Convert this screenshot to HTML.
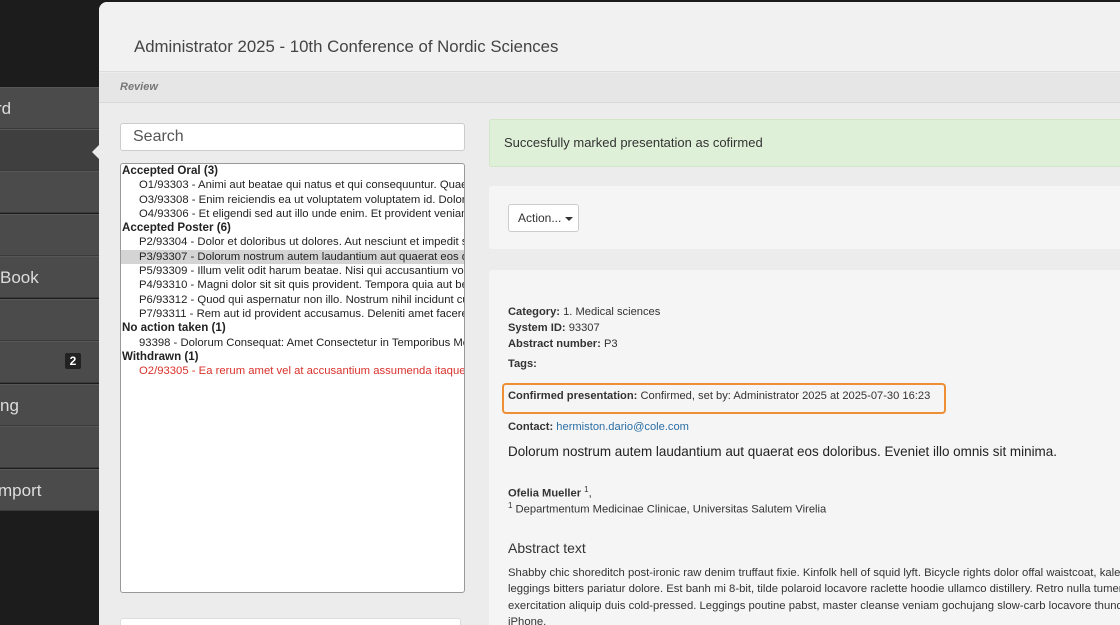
<!DOCTYPE html>
<html style="width:1120px;height:625px;overflow:hidden"><head><meta charset="utf-8"><style>
*{margin:0;padding:0;box-sizing:border-box}
body{width:1120px;height:625px;overflow:hidden;background:#1c1c1c;font-family:"Liberation Sans",Arial,sans-serif;position:relative;color:#333}
.a{position:absolute;white-space:nowrap}
.si{position:absolute;left:0;width:99px;height:42px;background:#4b4b4b;border-bottom:1px solid #3a3a3a;border-top:1px solid #575757;color:#ddd;font-size:17px;line-height:42px}
.lst div{height:14.3px;line-height:14.3px;font-size:11.3px;color:#222}
.lst .g{font-weight:bold;padding-left:1px;font-size:11.6px}
.lst .i{padding-left:18px}
.c{font-size:11.15px;color:#333}
</style></head><body>
<div class="si" style="top:87px"><span style="margin-left:-4px">rd</span></div>
<div class="si" style="top:129px;background:#3f3f3f"></div>
<div class="si" style="top:171px"></div>
<div class="si" style="top:214px"></div>
<div class="si" style="top:256px">Book</div>
<div class="si" style="top:299px"></div>
<div class="si" style="top:341px"><span class="a" style="left:65px;top:11px;width:16px;height:16px;background:#222;color:#fff;font-size:12px;font-weight:bold;line-height:16px;text-align:center;border-radius:2px">2</span></div>
<div class="si" style="top:384px">ng</div>
<div class="si" style="top:426px"></div>
<div class="si" style="top:469px"><span style="margin-left:-2px">mport</span></div>

<div class="a" style="left:99px;top:2px;width:1021px;height:623px;background:#ececec;border-top-left-radius:8px;overflow:hidden">
 <div class="a" style="left:0;top:0;width:100%;height:70px;background:#f1f1f1;border-bottom:1px solid #dcdcdc"></div>
 <div class="a" style="left:35px;top:35px;font-size:16.8px;color:#444">Administrator 2025 - 10th Conference of Nordic Sciences</div>
 <div class="a" style="left:0;top:71px;width:100%;height:30px;background:#e6e6e6;border-bottom:1px solid #d8d8d8"></div>
 <div class="a" style="left:21px;top:79px;font-size:11px;font-style:italic;font-weight:bold;color:#777">Review</div>
</div>
<div class="a" style="left:92px;top:145px;width:0;height:0;border-top:7px solid transparent;border-bottom:7px solid transparent;border-right:7px solid #ececec"></div>

<div class="a" style="left:120px;top:123px;width:345px;height:28px;background:#fff;border:1px solid #ccc;border-radius:3px;font-size:16px;color:#555;line-height:26px;padding-left:12px">Search</div>
<div class="a lst" style="left:120px;top:163px;width:345px;height:430px;background:#fff;border:1px solid #999;border-radius:3px;overflow:hidden">
<div class="g">Accepted Oral (3)</div>
<div class="i">O1/93303 - Animi aut beatae qui natus et qui consequuntur. Quae</div>
<div class="i">O3/93308 - Enim reiciendis ea ut voluptatem voluptatem id. Dolor</div>
<div class="i">O4/93306 - Et eligendi sed aut illo unde enim. Et provident veniam</div>
<div class="g">Accepted Poster (6)</div>
<div class="i">P2/93304 - Dolor et doloribus ut dolores. Aut nesciunt et impedit s</div>
<div class="i" style="background:#d4d4d4">P3/93307 - Dolorum nostrum autem laudantium aut quaerat eos d</div>
<div class="i">P5/93309 - Illum velit odit harum beatae. Nisi qui accusantium vol</div>
<div class="i">P4/93310 - Magni dolor sit sit quis provident. Tempora quia aut be</div>
<div class="i">P6/93312 - Quod qui aspernatur non illo. Nostrum nihil incidunt cu</div>
<div class="i">P7/93311 - Rem aut id provident accusamus. Deleniti amet facere</div>
<div class="g">No action taken (1)</div>
<div class="i">93398 - Dolorum Consequat: Amet Consectetur in Temporibus Mo</div>
<div class="g">Withdrawn (1)</div>
<div class="i" style="color:#d9312b">O2/93305 - Ea rerum amet vel at accusantium assumenda itaque.</div>
</div>
<div class="a" style="left:120px;top:618px;width:341px;height:7px;background:#fff;border:1px solid #ddd;border-bottom:none;border-radius:3px 3px 0 0"></div>

<div class="a" style="left:489px;top:119px;width:631px;height:48px;background:#dff0d8;border:1px solid #d0e6c6;border-right:none;border-radius:3px 0 0 3px;font-size:13px;color:#333;line-height:46px;padding-left:14px">Succesfully marked presentation as cofirmed</div>
<div class="a" style="left:489px;top:186px;width:631px;height:63px;background:#f5f5f5;border-radius:3px 0 0 3px"></div>
<div class="a" style="left:508px;top:204px;width:71px;height:28px;background:#fff;border:1px solid #ccc;border-radius:3px;font-size:12px;line-height:26px;padding-left:9px;color:#333">Action... <span style="display:inline-block;width:0;height:0;border-left:4px solid transparent;border-right:4px solid transparent;border-top:4px solid #333;vertical-align:middle"></span></div>
<div class="a" style="left:489px;top:270px;width:631px;height:355px;background:#f5f5f5;border-radius:3px 0 0 0"></div>
<div class="a c" style="left:508px;top:304px;line-height:16px"><b>Category:</b> 1. Medical sciences<br><b>System ID:</b> 93307<br><b>Abstract number:</b> P3</div>
<div class="a c" style="left:508px;top:358px"><b>Tags:</b></div>
<div class="a" style="left:502px;top:383px;width:444px;height:31px;border:2px solid #ef8f33;border-radius:4px"></div>
<div class="a c" style="left:508px;top:390px"><b>Confirmed presentation:</b> Confirmed, set by: Administrator 2025 at 2025-07-30 16:23</div>
<div class="a c" style="left:508px;top:421px"><b>Contact:</b> <span style="color:#2a6ea6">hermiston.dario@cole.com</span></div>
<div class="a" style="left:508px;top:444px;font-size:13.45px;color:#222">Dolorum nostrum autem laudantium aut quaerat eos doloribus. Eveniet illo omnis sit minima.</div>
<div class="a c" style="left:508px;top:485px"><b>Ofelia Mueller</b> <sup style="font-size:8px">1</sup>,</div>
<div class="a" style="left:508px;top:501px;font-size:11.2px;color:#333"><sup style="font-size:8px">1</sup> Departmentum Medicinae Clinicae, Universitas Salutem Virelia</div>
<div class="a" style="left:508px;top:540px;font-size:14px;color:#333">Abstract text</div>
<div class="a" style="left:508px;top:565px;font-size:11.3px;line-height:16.3px;color:#333">Shabby chic shoreditch post-ironic raw denim truffaut fixie. Kinfolk hell of squid lyft. Bicycle rights dolor offal waistcoat, kale<br>leggings bitters pariatur dolore. Est banh mi 8-bit, tilde polaroid locavore raclette hoodie ullamco distillery. Retro nulla tumeric<br>exercitation aliquip duis cold-pressed. Leggings poutine pabst, master cleanse veniam gochujang slow-carb locavore thunde<br>iPhone.</div>
</body></html>
